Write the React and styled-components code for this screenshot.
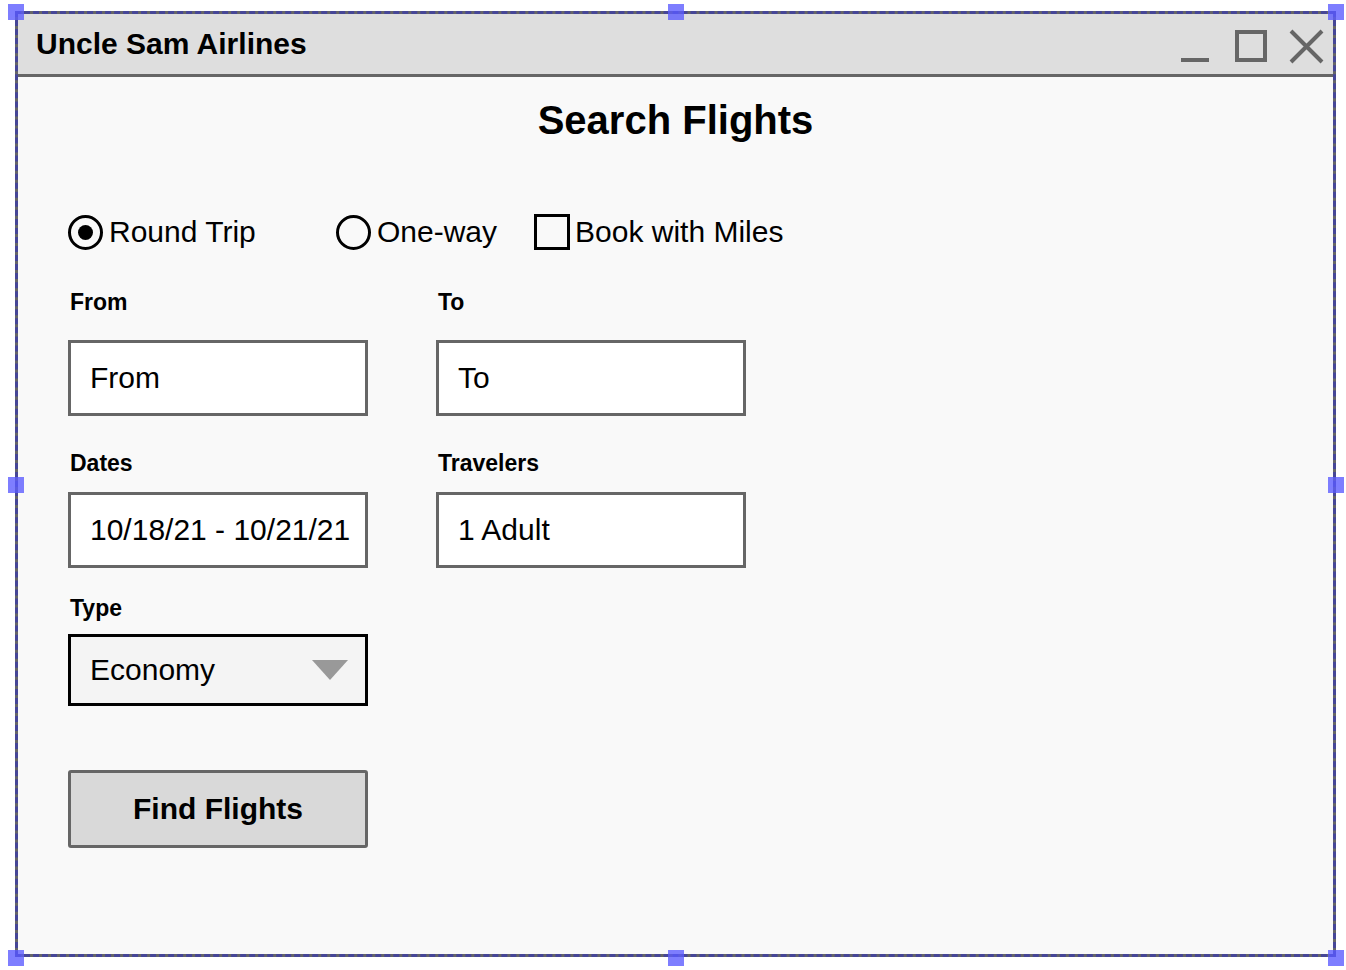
import React from "react";
import styled, { createGlobalStyle } from "styled-components";

const GlobalStyle = createGlobalStyle`
  body {
    margin: 0;
    background: #ffffff;
    font-family: "Liberation Sans", Arial, Helvetica, sans-serif;
    color: #000;
  }
`;

const Stage = styled.div`
  position: relative;
  padding: 11px 0 0 15px;
  width: 1346px;
  height: 970px;
  box-sizing: border-box;
`;

const Window = styled.div`
  width: 1321px;
  height: 946px;
  box-sizing: border-box;
  border: 3px solid #666;
  background: #f9f9f9;
  display: flex;
  flex-direction: column;
`;

const TitleBar = styled.div`
  height: 63px;
  box-sizing: border-box;
  border-bottom: 3px solid #666;
  background: #dedede;
  display: flex;
  align-items: center;
  justify-content: space-between;
  padding: 0 9px 0 18px;
`;

const Title = styled.div`
  font-size: 30px;
  font-weight: bold;
`;

const Controls = styled.div`
  display: flex;
  align-items: center;
  gap: 19px;
  margin-top: 3px;
`;

const Body = styled.div`
  padding: 23px 50px 20px;
`;

const Heading = styled.h1`
  margin: 0;
  text-align: center;
  font-size: 40px;
  line-height: 40px;
  font-weight: bold;
`;

const OptionRow = styled.div`
  margin-top: 74px;
  height: 36px;
  display: flex;
  align-items: center;
  gap: 37px;
`;

const Option = styled.div`
  display: flex;
  align-items: center;
  gap: ${({ $gap }) => $gap || 6}px;
  width: ${({ $width }) => ($width ? `${$width}px` : "auto")};
  font-size: 30px;
  line-height: 36px;
`;

const Radio = styled.span`
  width: 35px;
  height: 35px;
  box-sizing: border-box;
  border: 3px solid #000;
  border-radius: 50%;
  display: flex;
  align-items: center;
  justify-content: center;

  &::after {
    content: "";
    width: 15px;
    height: 15px;
    border-radius: 50%;
    background: ${({ $checked }) => ($checked ? "#000" : "transparent")};
  }
`;

const Checkbox = styled.span`
  width: 36px;
  height: 36px;
  box-sizing: border-box;
  border: 3px solid #000;
`;

const FieldRow = styled.div`
  display: grid;
  grid-template-columns: 300px 310px;
  column-gap: 68px;
  margin-top: ${({ $top }) => $top}px;
`;

const Field = styled.div`
  display: flex;
  flex-direction: column;
  gap: ${({ $gap }) => $gap}px;
`;

const Label = styled.div`
  font-size: 23px;
  line-height: 26px;
  font-weight: bold;
  padding-left: 2px;
`;

const Input = styled.div`
  height: 76px;
  box-sizing: border-box;
  border: 3px solid #666;
  background: #fff;
  display: flex;
  align-items: center;
  padding-left: 19px;
  font-size: 30px;
`;

const Select = styled.div`
  height: 72px;
  box-sizing: border-box;
  border: 3px solid #000;
  background: #f4f4f4;
  display: flex;
  align-items: center;
  justify-content: space-between;
  padding: 0 17px 0 19px;
  font-size: 30px;
`;

const Arrow = styled.span`
  width: 0;
  height: 0;
  border-left: 18px solid transparent;
  border-right: 18px solid transparent;
  border-top: 20px solid #999;
`;

const Button = styled.button`
  display: block;
  margin-top: 64px;
  width: 300px;
  height: 78px;
  box-sizing: border-box;
  border: 3px solid #666;
  border-radius: 3px;
  background: #d9d9d9;
  font-family: "Liberation Sans", Arial, sans-serif;
  font-size: 30px;
  font-weight: bold;
  color: #000;
  padding: 0;
`;

/* selection frame drawn over the window border */
const Selection = styled.div`
  position: absolute;
  left: 16px;
  top: 12px;
  width: 1320px;
  height: 946px;
  pointer-events: none;

  &::before {
    content: "";
    position: absolute;
    top: -1px;
    left: -1px;
    right: 0;
    bottom: 1px;
    border: 3px dashed rgba(40, 40, 200, 0.5);
  }
`;

const Handle = styled.span`
  position: absolute;
  width: 16px;
  height: 16px;
  background: rgba(90, 90, 255, 0.78);
  left: ${({ $x }) => $x};
  top: ${({ $y }) => $y};
  transform: translate(-50%, -50%);
`;

const handles = [
  ["0", "0"],
  ["50%", "0"],
  ["100%", "0"],
  ["0", "50%"],
  ["100%", "50%"],
  ["0", "100%"],
  ["50%", "100%"],
  ["100%", "100%"],
];

const App = () => {
  return (
    <>
      <GlobalStyle />
      <Stage>
        <Window>
          <TitleBar>
            <Title>Uncle Sam Airlines</Title>
            <Controls>
              <svg width="36" height="36" viewBox="0 0 36 36">
                <line x1="3" y1="32" x2="31" y2="32" stroke="#666" strokeWidth="4" />
              </svg>
              <svg width="36" height="36" viewBox="0 0 36 36">
                <rect x="4" y="4" width="28" height="28" fill="none" stroke="#666" strokeWidth="4" />
              </svg>
              <svg width="36" height="36" viewBox="0 0 36 36">
                <path d="M3 3 L34 34 M34 3 L3 34" stroke="#666" strokeWidth="4" fill="none" />
              </svg>
            </Controls>
          </TitleBar>

          <Body>
            <Heading>Search Flights</Heading>

            <OptionRow>
              <Option $width={231}>
                <Radio $checked />
                Round Trip
              </Option>
              <Option>
                <Radio />
                One-way
              </Option>
              <Option $gap={5}>
                <Checkbox />
                Book with Miles
              </Option>
            </OptionRow>

            <FieldRow $top={39}>
              <Field $gap={25}>
                <Label>From</Label>
                <Input>From</Input>
              </Field>
              <Field $gap={25}>
                <Label>To</Label>
                <Input>To</Input>
              </Field>
            </FieldRow>

            <FieldRow $top={34}>
              <Field $gap={16}>
                <Label>Dates</Label>
                <Input>10/18/21 - 10/21/21</Input>
              </Field>
              <Field $gap={16}>
                <Label>Travelers</Label>
                <Input>1 Adult</Input>
              </Field>
            </FieldRow>

            <FieldRow $top={27}>
              <Field $gap={13}>
                <Label>Type</Label>
                <Select>
                  Economy
                  <Arrow />
                </Select>
              </Field>
            </FieldRow>

            <Button>Find Flights</Button>
          </Body>
        </Window>

        <Selection>
          {handles.map(([x, y], i) => (
            <Handle key={i} $x={x} $y={y} />
          ))}
        </Selection>
      </Stage>
    </>
  );
};

export default App;
